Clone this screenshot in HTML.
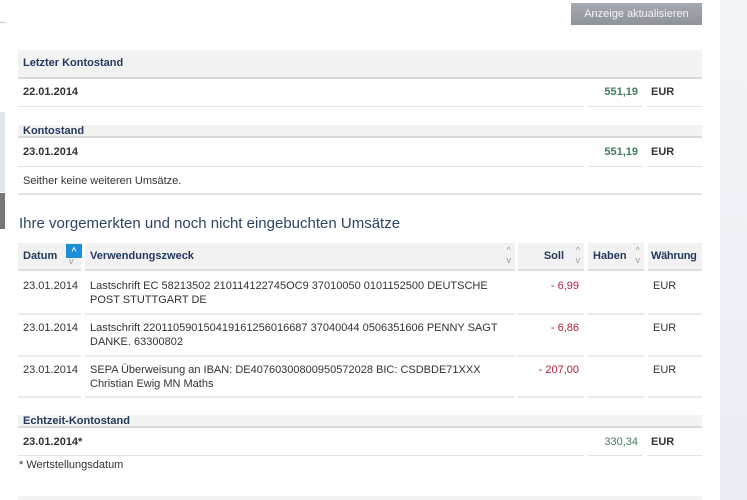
<!DOCTYPE html>
<html><head><meta charset="utf-8"><style>
*{margin:0;padding:0;box-sizing:border-box}
body{width:747px;height:500px;background:#fff;font-family:"Liberation Sans",Arial,sans-serif;font-size:11px;color:#333;position:relative;overflow:hidden}
.a{position:absolute}
.side{left:720px;top:0;width:27px;height:500px;background:linear-gradient(#f3f5f8,#e9edf2)}
.btn{left:571px;top:3px;width:131px;height:22px;background:linear-gradient(#a5aab2,#8e949c);color:#f4f4f4;font-size:11px;text-align:center;line-height:22px}
.hd{background:#f2f2f2;border-bottom:2px solid #d8d8d8;color:#23395d;font-weight:bold;padding-left:5px}
.line{border-bottom:1px solid #e3e3e3}
.b{font-weight:bold}
.g{color:#3d7f5c}
.r{color:#b0203a}
.th{background:#f2f2f2;border-bottom:2px solid #dedede;color:#23395d;font-weight:bold;height:28px;line-height:26px;padding-left:5px;top:243px}
.td{border-bottom:2px solid #eaeaea;padding:6px 5px;line-height:14px}
.arr{position:absolute;right:4px;top:2px;color:#999;font-size:9px;line-height:10px;font-weight:normal}
</style></head><body>
<div class="a side"></div>
<div class="a" style="left:0;top:22px;width:6px;height:1px;background:#ccc"></div>
<div class="a" style="left:0;top:112px;width:5px;height:80px;background:#dfe6ee"></div>
<div class="a" style="left:0;top:193px;width:5px;height:36px;background:#777"></div>
<div class="a btn">Anzeige aktualisieren</div>

<div class="a hd" style="left:18px;top:50px;width:684px;height:29px;line-height:27px;font-size:11px">Letzter Kontostand</div>
<div class="a line b" style="left:18px;top:79px;width:566px;height:28px;line-height:27px;padding-left:5px">22.01.2014</div>
<div class="a line b g" style="left:588px;top:79px;width:55px;height:28px;line-height:27px;text-align:right;padding-right:5px">551,19</div>
<div class="a line b" style="left:647px;top:79px;width:55px;height:28px;line-height:27px;padding-left:4px">EUR</div>

<div class="a hd" style="left:18px;top:125px;width:684px;height:13px;line-height:12px">Kontostand</div>
<div class="a line b" style="left:18px;top:138px;width:566px;height:29px;line-height:28px;padding-left:5px">23.01.2014</div>
<div class="a line b g" style="left:588px;top:138px;width:55px;height:29px;line-height:28px;text-align:right;padding-right:5px">551,19</div>
<div class="a line b" style="left:647px;top:138px;width:55px;height:29px;line-height:28px;padding-left:4px">EUR</div>
<div class="a line" style="left:18px;top:167px;width:684px;height:28px;line-height:28px;padding-left:5px;border-bottom-width:2px">Seither keine weiteren Umsätze.</div>

<div class="a" style="left:19px;top:215px;font-size:15px;color:#2b4566">Ihre vorgemerkten und noch nicht eingebuchten Umsätze</div>

<div class="a th" style="left:18px;width:63px">Datum<span style="position:absolute;left:48px;top:1px;width:16px;height:14px;background:#1c8fd6;color:#fff;font-size:9px;line-height:14px;text-align:center">^</span><span style="position:absolute;left:51px;top:13px;color:#999;font-size:9px;line-height:10px;font-weight:normal">v</span></div>
<div class="a th" style="left:85px;width:430px">Verwendungszweck<span class="arr">^<br>v</span></div>
<div class="a th" style="left:518px;width:66px;text-align:right;padding-right:20px">Soll<span class="arr">^<br>v</span></div>
<div class="a th" style="left:588px;width:56px">Haben<span class="arr">^<br>v</span></div>
<div class="a th" style="left:648px;width:54px;padding-left:3px;letter-spacing:-0.3px">Währung</div>

<div class="a td" style="left:18px;top:273px;width:63px;height:42px">23.01.2014</div>
<div class="a td" style="left:85px;top:273px;width:430px;height:42px">Lastschrift EC 58213502 210114122745OC9 37010050 0101152500 DEUTSCHE POST STUTTGART DE</div>
<div class="a td r" style="left:518px;top:273px;width:66px;height:42px;text-align:right">- 6,99</div>
<div class="a td" style="left:588px;top:273px;width:56px;height:42px"></div>
<div class="a td" style="left:648px;top:273px;width:54px;height:42px">EUR</div>

<div class="a td" style="left:18px;top:315px;width:63px;height:42px">23.01.2014</div>
<div class="a td" style="left:85px;top:315px;width:430px;height:42px">Lastschrift 220110590150419161256016687 37040044 0506351606 PENNY SAGT DANKE. 63300802</div>
<div class="a td r" style="left:518px;top:315px;width:66px;height:42px;text-align:right">- 6,86</div>
<div class="a td" style="left:588px;top:315px;width:56px;height:42px"></div>
<div class="a td" style="left:648px;top:315px;width:54px;height:42px">EUR</div>

<div class="a td" style="left:18px;top:357px;width:63px;height:41px">23.01.2014</div>
<div class="a td" style="left:85px;top:357px;width:430px;height:41px">SEPA Überweisung an IBAN: DE40760300800950572028 BIC: CSDBDE71XXX Christian Ewig MN Maths</div>
<div class="a td r" style="left:518px;top:357px;width:66px;height:41px;text-align:right">- 207,00</div>
<div class="a td" style="left:588px;top:357px;width:56px;height:41px"></div>
<div class="a td" style="left:648px;top:357px;width:54px;height:41px">EUR</div>

<div class="a hd" style="left:18px;top:415px;width:684px;height:13px;line-height:12px">Echtzeit-Kontostand</div>
<div class="a line b" style="left:18px;top:428px;width:566px;height:28px;line-height:28px;padding-left:5px">23.01.2014*</div>
<div class="a line g" style="left:588px;top:428px;width:55px;height:28px;line-height:28px;text-align:right;padding-right:5px">330,34</div>
<div class="a line b" style="left:647px;top:428px;width:55px;height:28px;line-height:28px;padding-left:4px">EUR</div>
<div class="a" style="left:19px;top:459px">* Wertstellungsdatum</div>
<div class="a" style="left:18px;top:496px;width:684px;height:4px;background:#f2f2f2"></div>
</body></html>
